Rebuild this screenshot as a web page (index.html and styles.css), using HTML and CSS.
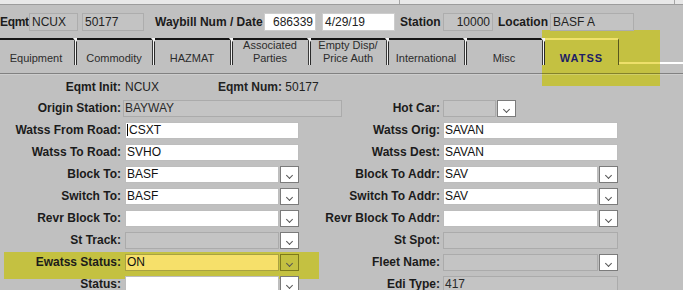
FILE: index.html
```html
<!DOCTYPE html>
<html lang="en">
<head>
  <meta charset="UTF-8">
  <title>Waybill - WATSS</title>
  <link rel="stylesheet" href="styles.css">
</head>
<body>
  <div class="screen">
    <div class="topstrip"><span class="tick"></span><span class="tick tick-end"></span></div>

    <div class="header">
      <span class="hlabel h-eqmt">Eqmt</span>
      <span class="box w-init">NCUX</span>
      <span class="box w-num">50177</span>
      <span class="hlabel h-waybill">Waybill Num / Date</span>
      <span class="box white right w-bill">686339</span>
      <span class="box white w-date">4/29/19</span>
      <span class="hlabel h-station">Station</span>
      <span class="box right w-station">10000</span>
      <span class="hlabel h-location">Location</span>
      <span class="box w-loc">BASF A</span>
    </div>

    <div class="tabs">
      <div class="tab">Equipment</div>
      <div class="tab">Commodity</div>
      <div class="tab">HAZMAT</div>
      <div class="tab">Associated<br>Parties</div>
      <div class="tab">Empty Disp/<br>Price Auth</div>
      <div class="tab">International</div>
      <div class="tab">Misc</div>
      <div class="tab active">WATSS</div>
      <div class="rest"></div>
    </div>
    <div class="rule"></div>

    <div class="form">
      <!-- row 1 -->
      <span class="lbl">Eqmt Init:</span>
      <span class="val"><span class="init">NCUX</span><b>Eqmt Num:</b> 50177</span>
      <span></span>
      <span></span>

      <!-- row 2 -->
      <span class="lbl">Origin Station:</span>
      <div class="field off wide">BAYWAY</div>
      <span class="lbl">Hot Car:</span>
      <div class="select r small"><div class="field off"></div><div class="btn"></div></div>

      <!-- row 3 -->
      <span class="lbl">Watss From Road:</span>
      <div class="field"><span class="caret"></span>CSXT</div>
      <span class="lbl">Watss Orig:</span>
      <div class="field r">SAVAN</div>

      <!-- row 4 -->
      <span class="lbl">Watss To Road:</span>
      <div class="field">SVHO</div>
      <span class="lbl">Watss Dest:</span>
      <div class="field r">SAVAN</div>

      <!-- row 5 -->
      <span class="lbl">Block To:</span>
      <div class="select"><div class="field">BASF</div><div class="btn"></div></div>
      <span class="lbl">Block To Addr:</span>
      <div class="select r"><div class="field">SAV</div><div class="btn"></div></div>

      <!-- row 6 -->
      <span class="lbl">Switch To:</span>
      <div class="select"><div class="field">BASF</div><div class="btn"></div></div>
      <span class="lbl">Switch To Addr:</span>
      <div class="select r"><div class="field">SAV</div><div class="btn"></div></div>

      <!-- row 7 -->
      <span class="lbl">Revr Block To:</span>
      <div class="select"><div class="field"></div><div class="btn"></div></div>
      <span class="lbl">Revr Block To Addr:</span>
      <div class="select r"><div class="field"></div><div class="btn"></div></div>

      <!-- row 8 -->
      <span class="lbl">St Track:</span>
      <div class="select"><div class="field off"></div><div class="btn"></div></div>
      <span class="lbl">St Spot:</span>
      <div class="field r off"></div>

      <!-- row 9 -->
      <span class="lbl">Ewatss Status:</span>
      <div class="select"><div class="field hl">ON</div><div class="btn hl"></div></div>
      <span class="lbl">Fleet Name:</span>
      <div class="select r"><div class="field off"></div><div class="btn"></div></div>

      <!-- row 10 -->
      <span class="lbl">Status:</span>
      <div class="select"><div class="field"></div><div class="btn"></div></div>
      <span class="lbl">Edi Type:</span>
      <div class="field r off">417</div>
    </div>

    <!-- highlighter marks -->
    <div class="marker marker-tab"></div>
    <div class="marker marker-row"></div>
  </div>
</body>
</html>
```

FILE: styles.css
```css
body {
  margin: 0;
  background-color: #c0c0c0;
  font-family: "Liberation Sans", Arial, sans-serif;
  font-size: 12px;
  color: #1b1b1b;
  overflow: hidden;
}

.screen {
  position: relative;
  z-index: 0;
  width: 683px;
  height: 290px;
  overflow: hidden;
}

/* strip at the very top */
.topstrip {
  display: flex;
  height: 4px;
  background-color: #e8e8e8;
  border-bottom: 1px solid #9c9c9c;
}

.topstrip .tick {
  width: 1px;
  margin-left: 399px;
  background-color: #a6a6a6;
}

.topstrip .tick-end {
  margin-left: 274px;
}

/* header row */
.header {
  display: flex;
  align-items: center;
  height: 18px;
  margin-top: 8px;
}

.hlabel {
  flex: none;
  box-sizing: border-box;
  font-weight: bold;
  white-space: nowrap;
}

.h-eqmt {
  width: 29px;
  letter-spacing: -0.3px;
}

.h-waybill {
  width: 120px;
  padding-left: 11px;
}

.h-station {
  width: 48px;
  padding-left: 5px;
}

.h-location {
  width: 57px;
  padding-left: 5px;
}

.box {
  flex: none;
  box-sizing: border-box;
  height: 18px;
  padding: 0 2px;
  line-height: 16px;
  border: 1px solid #adadad;
  background-color: #c3c3c3;
  color: #222;
  white-space: nowrap;
}

.box.white {
  background-color: #fff;
  border-color: #cdcdcd;
}

.box.right {
  text-align: right;
}

.w-init { width: 49px; }
.w-num { width: 62px; margin-left: 4px; }
.w-bill { width: 52px; }
.w-date { width: 73px; margin-left: 6px; }
.w-station { width: 50px; }
.w-loc { width: 84px; }

/* tab strip */
.tabs {
  display: flex;
  height: 27px;
  margin-top: 7px;
}

.tab {
  position: relative;
  flex: none;
  display: flex;
  align-items: flex-end;
  justify-content: center;
  width: 78px;
  box-sizing: border-box;
  padding: 0 3px 0 0;
  border-top: 2px solid #161616;
  border-right: 1px solid #2a2a2a;
  box-shadow: inset -1px 0 0 #f2f2f2, inset -2px 0 0 #3a3a3a;
  font-size: 11px;
  line-height: 13px;
  text-align: center;
  color: #2c2c2c;
}

.tab:first-child {
  margin-left: -1px;
}

.tab::after {
  content: "";
  position: absolute;
  top: -2px;
  right: -3px;
  border-left: 3px solid transparent;
  border-right: 3px solid transparent;
  border-top: 4px solid #f4f4f4;
}

.tab.active {
  width: 74px;
  padding-right: 0;
  border-top-color: #efe26c;
  border-right-color: rgba(0, 0, 0, 0.55);
  box-shadow: none;
  font-weight: bold;
  letter-spacing: 1px;
  color: #1d1d66;
}

.tab.active::after {
  display: none;
}

.tabs .rest {
  flex: 1;
  background: linear-gradient(to right, #eee06a 41px, #fff 41px) 0 24px / 100% 2px no-repeat;
}

.rule {
  margin-top: 8px;
  border-top: 1px solid rgba(0, 0, 0, 0.32);
  border-bottom: 1px solid rgba(255, 255, 255, 0.2);
}

/* form */
.form {
  display: grid;
  grid-template-columns: 121px 178px 141px 178px;
  grid-template-rows: 20px;
  grid-auto-rows: 22px;
  align-items: center;
  padding-top: 2px;
}

.lbl {
  font-weight: bold;
  text-align: right;
  white-space: nowrap;
}

.val {
  padding-left: 4px;
  color: #222;
  white-space: nowrap;
}

.val .init {
  display: inline-block;
  width: 93px;
}

.field {
  width: 174px;
  height: 17px;
  margin-left: 4px;
  box-sizing: border-box;
  padding-left: 1px;
  border: 1px solid #bdbdbd;
  background-color: #fff;
  line-height: 15px;
  color: #111;
  white-space: nowrap;
  overflow: hidden;
}

.field.r {
  width: 175px;
  margin-left: 3px;
}

.field.wide {
  width: 219px;
  margin-left: 2px;
}

.field.off {
  background-color: #c4c4c4;
  border-color: #ababab;
  color: #2a2a2a;
}

.field.hl {
  background-color: #f6e06a;
  border-color: #a9a242;
}

.caret {
  display: inline-block;
  width: 1px;
  height: 12px;
  margin-right: 1px;
  vertical-align: -2px;
  background-color: #000;
}

.select {
  display: flex;
  width: 174px;
  height: 17px;
  margin-left: 4px;
}

.select.r {
  width: 175px;
  margin-left: 3px;
}

.select.small {
  width: 73px;
}

.select .field {
  flex: 1;
  width: auto;
  margin: 0;
}

.btn {
  flex: none;
  display: flex;
  justify-content: center;
  align-items: flex-end;
  width: 19px;
  margin-left: 1px;
  box-sizing: border-box;
  padding-bottom: 4px;
  border: 1px solid #7b7b7b;
  background-color: #fff;
}

.btn::after {
  content: "";
  width: 4px;
  height: 4px;
  border-right: 1.5px solid #555;
  border-bottom: 1.5px solid #555;
  transform: rotate(45deg);
}

.btn.hl {
  background-color: transparent;
  border-color: #7d7a1c;
}

/* highlighter marks drawn over the screenshot */
.marker {
  position: absolute;
  z-index: -1;
  background-color: #c4c141;
}

.marker-tab {
  left: 542px;
  top: 30px;
  width: 118px;
  height: 56px;
}

.marker-row {
  left: 4px;
  top: 252px;
  width: 315px;
  height: 27px;
}
```
